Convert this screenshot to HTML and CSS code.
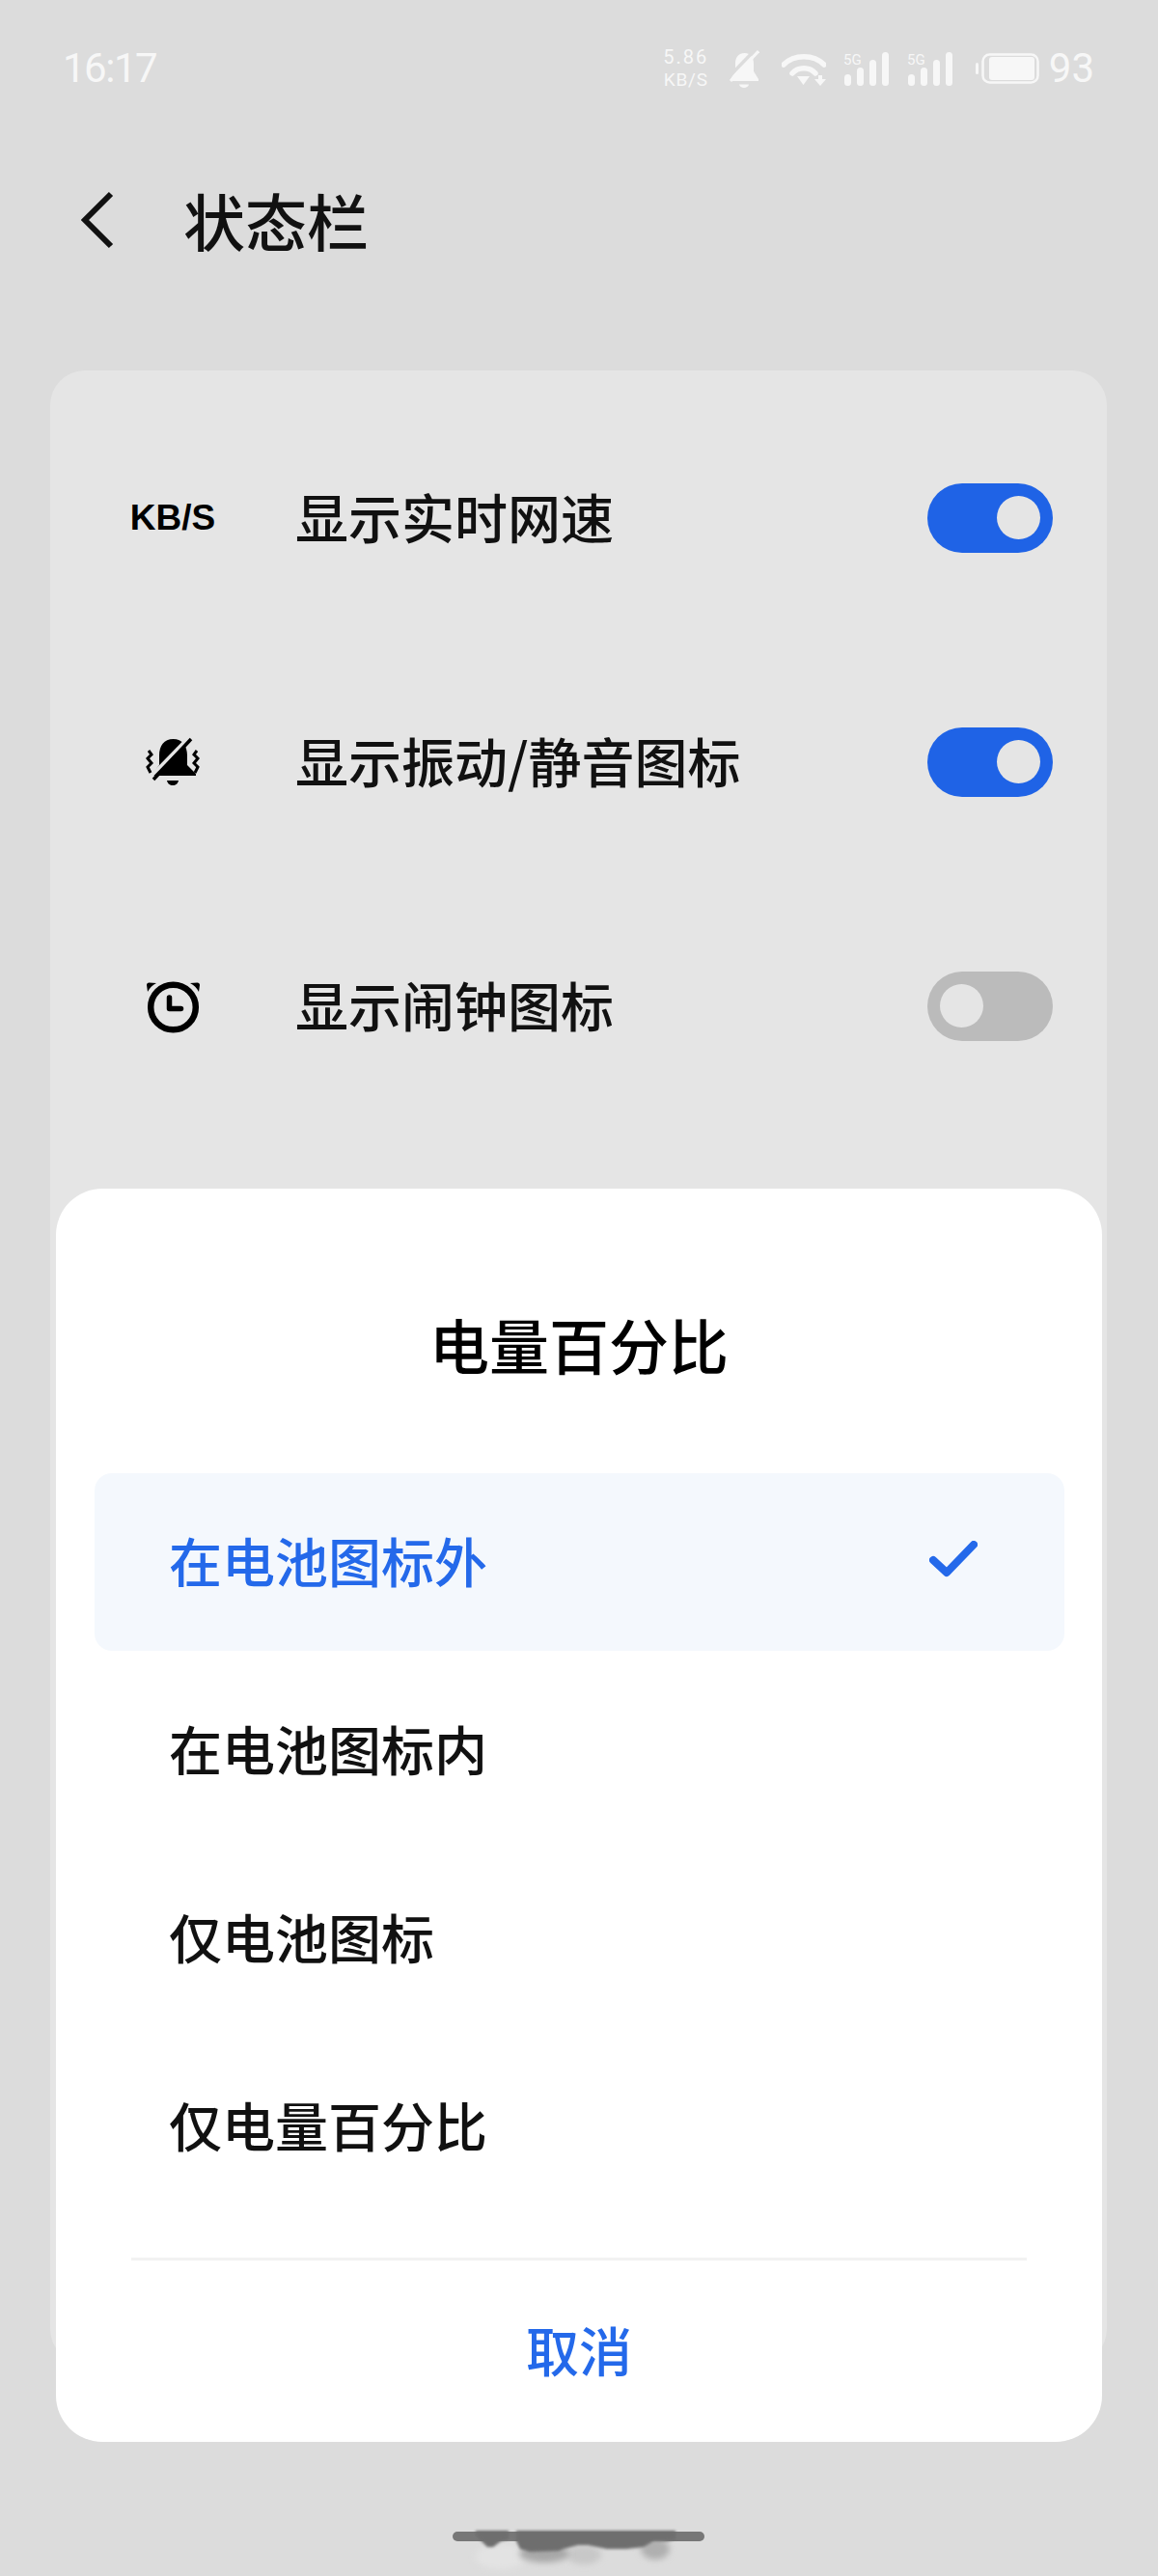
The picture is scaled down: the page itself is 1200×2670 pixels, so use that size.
FILE: index.html
```html
<!DOCTYPE html>
<html lang="zh-CN">
<head>
    <meta charset="UTF-8">
    <meta name="viewport" content="width=device-width, initial-scale=1.0">
    <title>状态栏</title>
    <link rel="stylesheet" href="styles.css">
</head>
<body>
    <div class="screen">
        <div class="status-bar">
            <span class="status-time">16:17</span>
            <div class="status-icons">
                <div class="net-speed"><span class="net-value">5.86</span><span>KB/S</span></div>
                <svg class="status-bell" width="32" height="39" viewBox="0 0 32 39">
                    <path d="M16.500 3c-6 0-9.500 4-9.500 11v8l-5 8v2h29v-2l-5-8v-8c0-7-3.500-11-9.500-11z" fill="#f7f7f7"/>
                    <path d="M11 35.500h10c-.5 2-2.500 3.500-5 3.500s-4.500-1.500-5-3.500z" fill="#f7f7f7"/>
                    <path d="M-2 30L29 -2" stroke="#dcdcdc" stroke-width="3.500"/>
                    <path d="M2 32L31 1" stroke="#f7f7f7" stroke-width="3"/>
                </svg>
                <svg class="status-wifi" width="46" height="35" viewBox="0 0 46 35">
                    <path d="M2 13C13 2 33 2 44 13" fill="none" stroke="#f7f7f7" stroke-width="5.500" stroke-linecap="round"/>
                    <path d="M11 22C17 15 29 15 35 22" fill="none" stroke="#f7f7f7" stroke-width="5.500" stroke-linecap="round"/>
                    <path d="M16 25h13l-6.500 9z" fill="#f7f7f7"/>
                    <path d="M38 24h4v4h4l-6 7-6-7h4z" fill="#f7f7f7"/>
                </svg>
                <svg class="status-signal" width="48" height="35" viewBox="0 0 48 35">
                    <text class="sim-label" x="0" y="13">5G</text>
                    <rect x="1" y="23" width="7" height="12" rx="3.500"/>
                    <rect x="14" y="16" width="7" height="19" rx="3.500"/>
                    <rect x="27" y="8" width="7" height="27" rx="3.500"/>
                    <rect x="40" y="0" width="7" height="35" rx="3.500"/>
                </svg>
                <svg class="status-signal" width="48" height="35" viewBox="0 0 48 35">
                    <text class="sim-label" x="0" y="13">5G</text>
                    <rect x="1" y="23" width="7" height="12" rx="3.500"/>
                    <rect x="14" y="16" width="7" height="19" rx="3.500"/>
                    <rect x="27" y="8" width="7" height="27" rx="3.500"/>
                    <rect x="40" y="0" width="7" height="35" rx="3.500"/>
                </svg>
                <svg class="status-battery" width="66" height="32" viewBox="0 0 66 32">
                    <rect x="0" y="10" width="3" height="12" rx="1.500" fill="#f7f7f7"/>
                    <rect x="7.500" y="1.500" width="57" height="29" rx="7" fill="none" stroke="#f7f7f7" stroke-width="2.500"/>
                    <rect x="14" y="4" width="47" height="24" rx="3" fill="#f7f7f7"/>
                </svg>
                <span class="status-level">93</span>
            </div>
        </div>

        <div class="app-header">
            <svg class="back-icon" width="34" height="60" viewBox="0 0 34 60">
                <path d="M31 3L4 30l27 27" fill="none" stroke="#111" stroke-width="6"/>
            </svg>
            <h1>状态栏</h1>
        </div>

        <div class="settings-card">
            <div class="setting-row">
                <div class="setting-icon"><span class="speed-badge">KB/S</span></div>
                <span class="setting-label">显示实时网速</span>
                <div class="toggle on"><span class="knob"></span></div>
            </div>
            <div class="setting-row">
                <div class="setting-icon">
                    <svg width="80" height="80" viewBox="-1 -1 80 80">
                        <path d="M39.500 15C30 15 25 22 25 32v10l-7 9v2h45v-2l-9-9V32c0-10-5-17-14.500-17z" fill="#000"/>
                        <path d="M33 58h12c-.5 3-3 5-6 5s-5.500-2-6-5z" fill="#000"/>
                        <path d="M16 54L52 17" stroke="#e5e5e5" stroke-width="3.500"/>
                        <path d="M19 57L58 15" stroke="#000" stroke-width="3.500"/>
                        <path d="M14 27l3 4-4 4 4 5-4 4 3 6M64 27l-3 4 4 4-4 5 4 4-3 6" fill="none" stroke="#000" stroke-width="3"/>
                    </svg>
                </div>
                <span class="setting-label">显示振动/静音图标</span>
                <div class="toggle on"><span class="knob"></span></div>
            </div>
            <div class="setting-row">
                <div class="setting-icon">
                    <svg width="80" height="80" viewBox="-1 -3 80 80">
                        <circle cx="39.500" cy="38" r="23.300" fill="none" stroke="#000" stroke-width="6.500"/>
                        <path d="M35.500 28v11.500H47.500" fill="none" stroke="#000" stroke-width="5.500" stroke-linecap="round" stroke-linejoin="round"/>
                        <path d="M12 15c0-1.500 1-2.500 2.500-2.500L22 13c-4 2-7 5-9 9zM67 15c0-1.500-1-2.500-2.500-2.500L57 13c4 2 7 5 9 9z" fill="#000"/>
                    </svg>
                </div>
                <span class="setting-label">显示闹钟图标</span>
                <div class="toggle"><span class="knob"></span></div>
            </div>
        </div>

        <div class="home-bar">
            <svg class="home-smudge" width="280" height="50" viewBox="0 0 280 50">
                <defs>
                    <filter id="smudge" x="-20%" y="-50%" width="140%" height="200%"><feGaussianBlur stdDeviation="1.500"/></filter>
                    <filter id="smudge-soft" x="-30%" y="-60%" width="160%" height="220%"><feGaussianBlur stdDeviation="3"/></filter>
                </defs>
                <ellipse cx="60" cy="30" rx="26" ry="13" fill="#e3e3e3" filter="url(#smudge-soft)"/>
                <ellipse cx="146" cy="28" rx="18" ry="10" fill="#c8c8c8" filter="url(#smudge-soft)"/>
                <ellipse cx="105" cy="27" rx="26" ry="9" fill="#a8a8a8" filter="url(#smudge-soft)"/>
                <ellipse cx="220" cy="22" rx="15" ry="11" fill="#b0b0b0" filter="url(#smudge-soft)"/>
                <g fill="#6e6e6e" filter="url(#smudge)">
                    <path d="M34 3H68V12L60 14 52 20 46 20 38 12 34 8Z"/>
                    <path d="M76 3H241V12L232 14 218 14 208 20 190 22 170 22 150 18 140 18 125 22 120 24 90 25 80 22 76 14Z"/>
                </g>
            </svg>
        </div>

        <div class="sheet">
            <h2>电量百分比</h2>
            <div class="option-list">
                <div class="option selected">
                    <span>在电池图标外</span>
                    <svg class="check-icon" width="50" height="38" viewBox="0 0 50 38">
                        <path d="M4 20l14 13L46 4" fill="none" stroke="#2469ea" stroke-width="8" stroke-linejoin="round" stroke-linecap="round"/>
                    </svg>
                </div>
                <div class="option"><span>在电池图标内</span></div>
                <div class="option"><span>仅电池图标</span></div>
                <div class="option"><span>仅电量百分比</span></div>
            </div>
            <div class="sheet-divider"></div>
            <div class="sheet-cancel">取消</div>
        </div>
    </div>
</body>
</html>
```

FILE: styles.css
```css
* {
    margin: 0;
    padding: 0;
    box-sizing: border-box;
}

body {
    font-family: "Noto Sans CJK SC", "Noto Sans", sans-serif;
    background: #dcdcdc;
}

.screen {
    position: relative;
    width: 1200px;
    height: 2670px;
    padding-top: 50px;
    overflow: hidden;
    background: #dcdcdc;
}

.status-bar {
    display: flex;
    align-items: center;
    justify-content: space-between;
    height: 42px;
    padding: 0 66px 0 65px;
    color: #f7f7f7;
}

.status-time {
    font-family: Roboto, sans-serif;
    font-size: 42px;
    letter-spacing: -1.500px;
    line-height: 42px;
}

.status-icons {
    display: flex;
    align-items: center;
}

.net-speed {
    display: flex;
    flex-direction: column;
    align-items: center;
    width: 46px;
    font-family: Roboto, sans-serif;
    font-size: 19px;
    letter-spacing: 0.800px;
    line-height: 23px;
}

.net-value {
    font-size: 20px;
    letter-spacing: 2px;
}

.status-bell {
    margin-left: 21px;
}

.status-wifi {
    margin-left: 23px;
}

.status-signal {
    margin-left: 18px;
    fill: #f7f7f7;
}

.sim-label {
    font-family: Roboto, sans-serif;
    font-size: 15px;
}

.status-battery {
    margin-left: 23px;
}

.status-level {
    margin-left: 10px;
    font-family: Roboto, sans-serif;
    font-size: 42px;
    line-height: 42px;
}

.app-header {
    display: flex;
    align-items: center;
    height: 100px;
    margin-top: 86px;
    padding-left: 84px;
}

.app-header h1 {
    margin-left: 72px;
    padding-bottom: 3px;
    color: #111;
    font-size: 64px;
    font-weight: 500;
    line-height: 84px;
}

.settings-card {
    width: 1095px;
    height: 2066px;
    margin: 106px 0 0 52px;
    padding: 26px 56px 0 72px;
    background: #e5e5e5;
    border-radius: 36px;
}

.setting-row {
    display: flex;
    align-items: center;
    height: 253px;
}

.setting-icon {
    display: flex;
    align-items: center;
    justify-content: center;
    flex-shrink: 0;
    width: 110px;
}

.speed-badge {
    color: #000;
    font-family: "Liberation Sans", sans-serif;
    font-size: 37px;
    font-weight: 700;
}

.setting-label {
    flex: 1;
    margin-left: 72px;
    padding-bottom: 5px;
    color: #111;
    font-size: 55px;
    font-weight: 500;
    line-height: 74px;
}

.toggle {
    display: flex;
    align-items: center;
    width: 130px;
    height: 72px;
    padding: 0 13px;
    background: #bbbbbb;
    border-radius: 36px;
}

.toggle.on {
    justify-content: flex-end;
    background: #1f63e6;
}

.knob {
    width: 45px;
    height: 45px;
    background: #e5e5e5;
    border-radius: 50%;
}

.home-bar {
    position: relative;
    width: 261px;
    height: 10px;
    margin: 174px 0 0 469px;
    background: #777777;
    border-radius: 5px;
}

.home-smudge {
    position: absolute;
    top: -4px;
    left: -10px;
}

/* bottom sheet sits on top of the settings card */
.sheet {
    position: absolute;
    top: 1232px;
    left: 58px;
    display: flex;
    flex-direction: column;
    width: 1084px;
    height: 1299px;
    padding-top: 97px;
    background: #fff;
    border-radius: 48px;
}

.sheet h2 {
    color: #000;
    font-size: 62px;
    font-weight: 500;
    line-height: 128px;
    text-align: center;
}

.option-list {
    display: flex;
    flex-direction: column;
    gap: 11px;
    margin: 70px 39px 0 40px;
}

.option {
    display: flex;
    align-items: center;
    justify-content: space-between;
    height: 184px;
    padding: 0 90px 7px 77px;
    color: #111;
    font-size: 55px;
    font-weight: 500;
}

.option.selected {
    color: #2469ea;
    background: #f4f8fd;
    border-radius: 18px;
}

.sheet-divider {
    height: 3px;
    margin: 44px 78px 0;
    background: #f2f2f2;
}

.sheet-cancel {
    display: flex;
    align-items: center;
    justify-content: center;
    flex: 1;
    padding-bottom: 7px;
    color: #2469ea;
    font-size: 55px;
    font-weight: 500;
}
```
